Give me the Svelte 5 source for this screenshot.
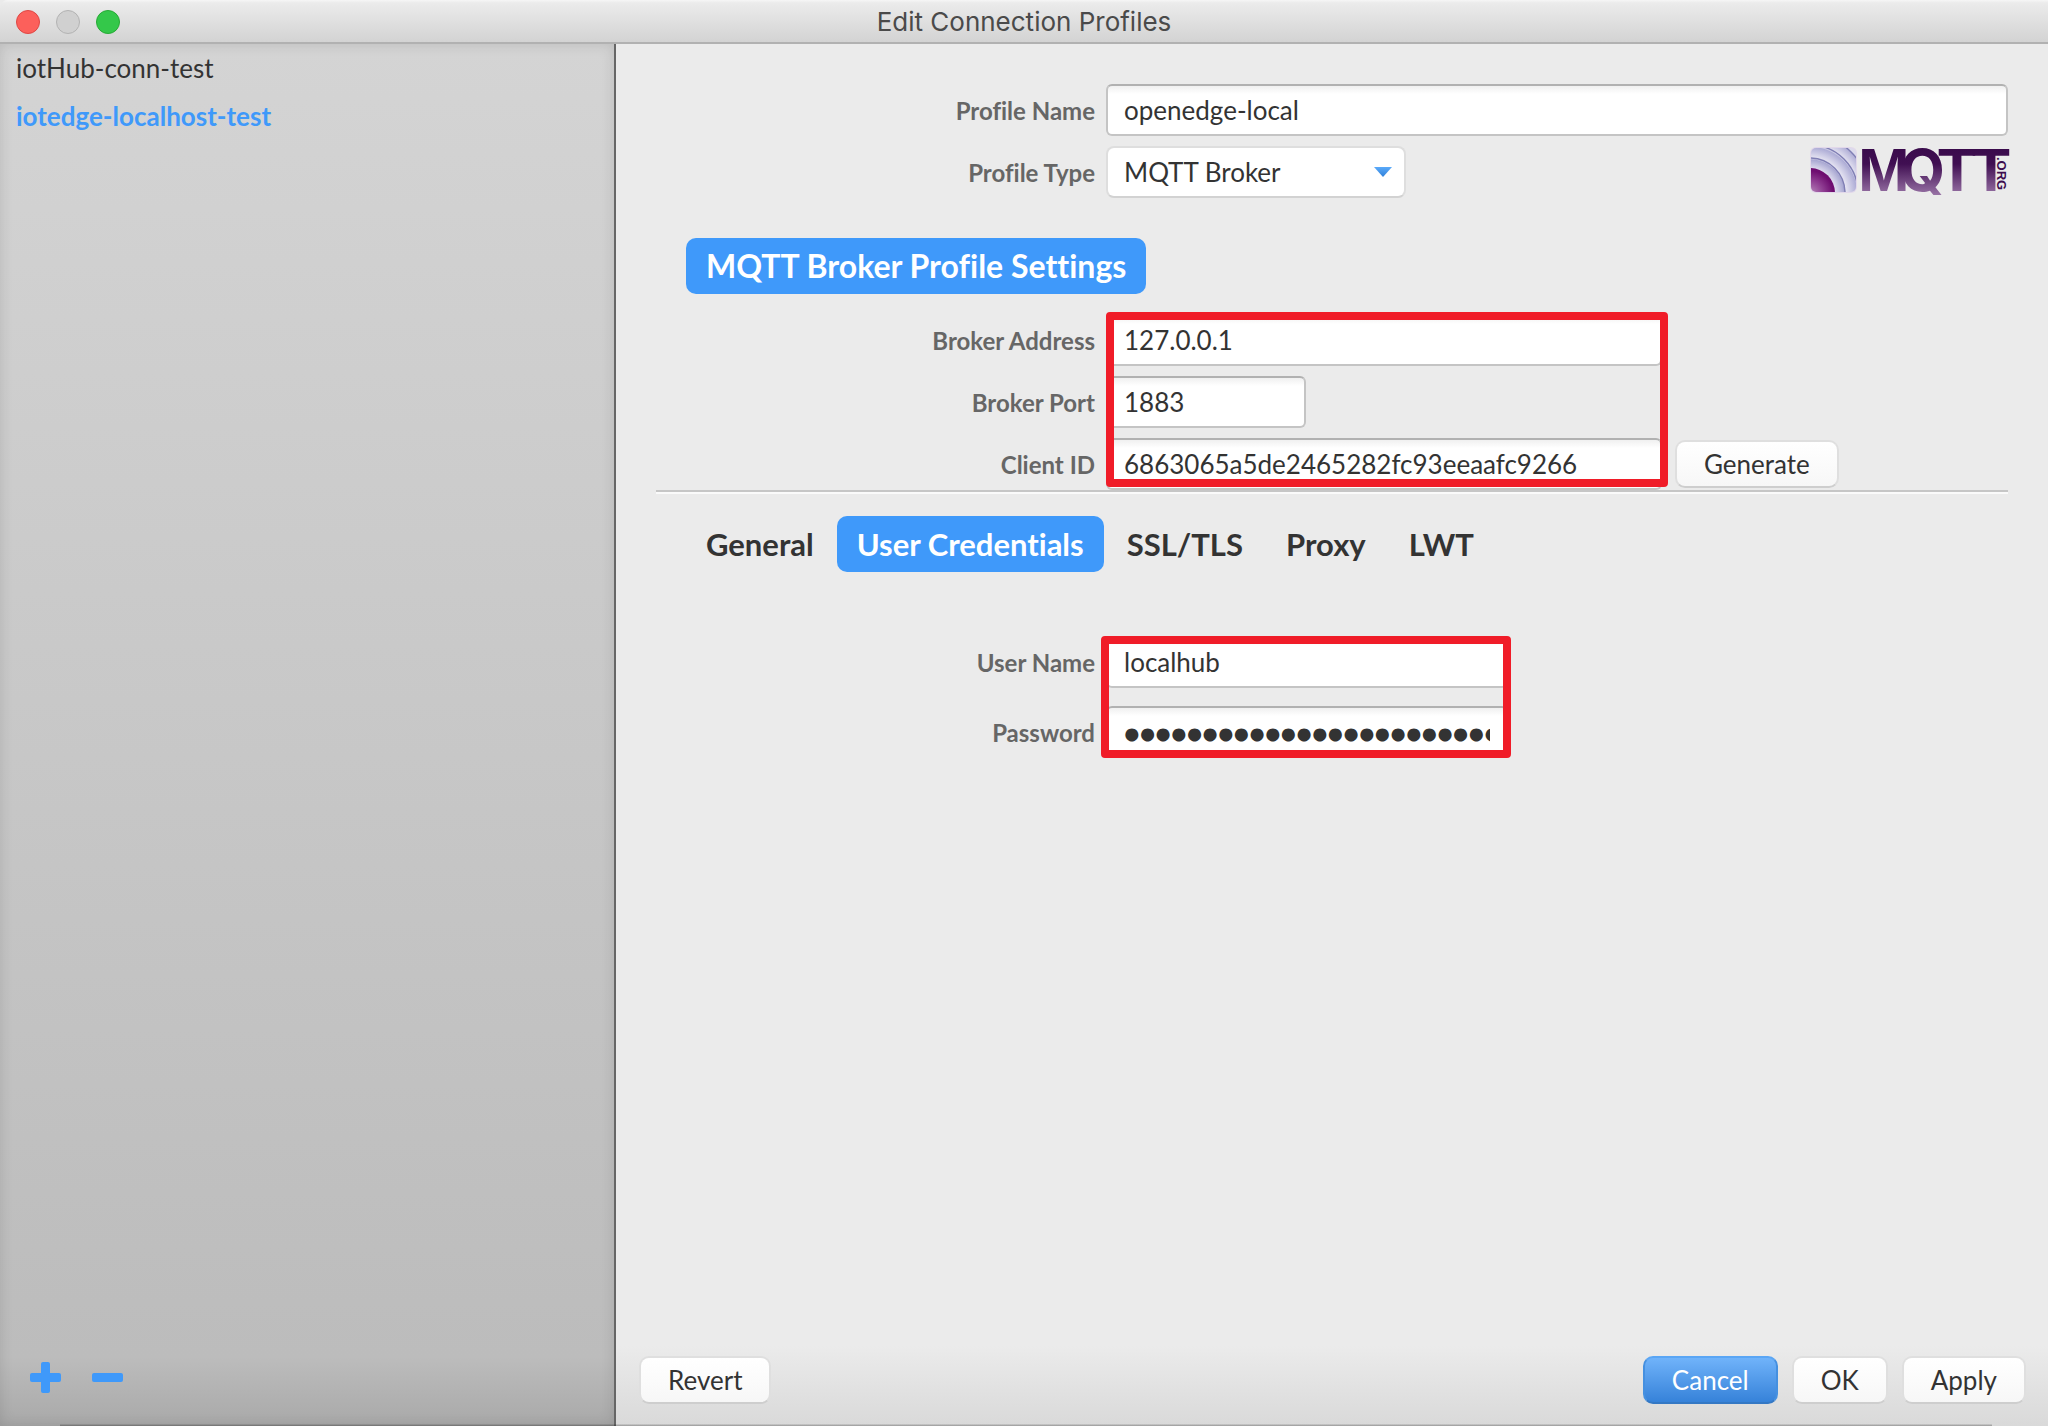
<script lang="ts">
  const profiles = ['iotHub-conn-test', 'iotedge-localhost-test'];
  const tabs = ['General', 'User Credentials', 'SSL/TLS', 'Proxy', 'LWT'];
  let selected = $state('iotedge-localhost-test');
  let activeTab = $state('User Credentials');
  let profileName = $state('openedge-local');
  let profileType = $state('MQTT Broker');
  let address = $state('127.0.0.1');
  let port = $state('1883');
  let clientId = $state('6863065a5de2465282fc93eeaafc9266');
  let userName = $state('localhub');
  let password = $state('abcdefghijklmnopqrstuvwxyz012345');
</script>

<div class="window">
  <header class="titlebar">
    <div class="lights">
      <button class="light close" aria-label="Close"></button>
      <button class="light minimize" aria-label="Minimize"></button>
      <button class="light zoom" aria-label="Zoom"></button>
    </div>
    <h1>Edit Connection Profiles</h1>
    <div></div>
  </header>

  <div class="body">
    <aside class="sidebar">
      <ul>
        {#each profiles as name}
          <li>
            <button class="profile" class:selected={name === selected} onclick={() => (selected = name)}>{name}</button>
          </li>
        {/each}
      </ul>
      <div class="tools">
        <button class="tool" aria-label="Add profile">
          <svg width="32" height="32" viewBox="0 0 32 32" fill="#3f99fa">
            <rect x="11" y="0" width="9" height="31" rx="2" />
            <rect x="0" y="11" width="31" height="9" rx="2" />
          </svg>
        </button>
        <button class="tool" aria-label="Remove profile">
          <svg width="32" height="32" viewBox="0 0 32 32" fill="#3f99fa">
            <rect x="0" y="11" width="31" height="9" rx="2" />
          </svg>
        </button>
      </div>
    </aside>

    <main>
      <div class="content">
        <section class="group">
          <label for="profile-name">Profile Name</label>
          <input id="profile-name" class="field" bind:value={profileName} />
          <label for="profile-type">Profile Type</label>
          <div class="type-row">
            <div class="select-wrap">
              <select id="profile-type" bind:value={profileType}>
                <option>MQTT Broker</option>
              </select>
              <svg class="arrow" width="18" height="10" viewBox="0 0 18 10">
                <defs>
                  <linearGradient id="arrow-fill" x1="0" y1="0" x2="0" y2="1">
                    <stop offset="0" stop-color="#5aaafa" />
                    <stop offset="1" stop-color="#2f80d8" />
                  </linearGradient>
                </defs>
                <path d="M0 0H18L9 10Z" fill="url(#arrow-fill)" />
              </svg>
            </div>
            <svg class="logo" width="198" height="52" viewBox="0 0 198 52" role="img" aria-label="MQTT.ORG">
              <defs>
                <linearGradient id="word" gradientUnits="userSpaceOnUse" x1="0" y1="3" x2="0" y2="50">
                  <stop offset="0" stop-color="#3a0b4c" />
                  <stop offset="0.32" stop-color="#400f52" />
                  <stop offset="1" stop-color="#9b76a8" />
                </linearGradient>
                <radialGradient id="waves" gradientUnits="userSpaceOnUse" cx="0" cy="48" r="60">
                  <stop offset="0.4" stop-color="#e6e4f2" />
                  <stop offset="0.57" stop-color="#a9a8d2" />
                  <stop offset="0.6" stop-color="#e6e4f2" />
                  <stop offset="0.78" stop-color="#aeadd6" />
                  <stop offset="0.81" stop-color="#e4e2f1" />
                  <stop offset="0.96" stop-color="#b4b2d8" />
                  <stop offset="1" stop-color="#dcdaec" />
                </radialGradient>
                <radialGradient id="core" gradientUnits="userSpaceOnUse" cx="0" cy="48" r="26">
                  <stop offset="0" stop-color="#b98abd" />
                  <stop offset="0.55" stop-color="#8d3a90" />
                  <stop offset="0.9" stop-color="#6e0d70" />
                </radialGradient>
                <clipPath id="tile"><rect x="1" y="2" width="45" height="44" rx="5" /></clipPath>
              </defs>
              <rect x="0" y="1" width="47" height="46" rx="6" fill="#e2d8ea" />
              <g clip-path="url(#tile)">
                <rect x="1" y="2" width="45" height="44" fill="url(#waves)" />
                <circle cx="0" cy="47" r="25" fill="url(#core)" />
                <g fill="none" stroke="#7f7eb4" stroke-width="1.4">
                  <circle cx="0" cy="47" r="35" />
                  <circle cx="0" cy="47" r="48" />
                  <circle cx="0" cy="47" r="58" />
                </g>
              </g>
              <text class="word" x="48 90 128 162" y="45" fill="url(#word)">M<tspan class="round">Q</tspan>TT</text>
              <text class="org" transform="translate(187 11) rotate(90)" fill="#3d0d4f">.ORG</text>
            </svg>
          </div>
        </section>

        <h2 class="pill">MQTT Broker Profile Settings</h2>

        <section class="group broker">
          <label for="address">Broker Address</label>
          <input id="address" class="field wide" bind:value={address} />
          <label for="port">Broker Port</label>
          <input id="port" class="field short" bind:value={port} />
          <label for="client-id">Client ID</label>
          <div class="client-row">
            <input id="client-id" class="field wide" bind:value={clientId} />
            <button class="btn">Generate</button>
          </div>
          <div class="mark broker-mark"></div>
        </section>

        <hr />

        <div class="tabs" role="tablist">
          {#each tabs as tab}
            <button class="tab" class:active={tab === activeTab} role="tab" aria-selected={tab === activeTab} onclick={() => (activeTab = tab)}>{tab}</button>
          {/each}
        </div>

        <section class="group credentials">
          <label for="user">User Name</label>
          <input id="user" class="field medium" bind:value={userName} />
          <label for="pass">Password</label>
          <input id="pass" class="field medium" type="password" bind:value={password} />
          <div class="mark user-mark"></div>
        </section>
      </div>

      <footer>
        <button class="btn">Revert</button>
        <div class="spacer"></div>
        <button class="btn primary">Cancel</button>
        <button class="btn">OK</button>
        <button class="btn">Apply</button>
      </footer>
    </main>
  </div>
</div>

<style>
  :global(body) {
    margin: 0;
    background: #ebebeb;
  }
  .window {
    position: relative;
    display: flex;
    flex-direction: column;
    min-height: 100vh;
    font-family: Lato, 'Liberation Sans', sans-serif;
    font-size: 26px;
    font-variant-ligatures: none;
    color: #333;
  }
  .window * {
    box-sizing: border-box;
  }
  .window::after {
    content: '';
    position: absolute;
    left: 60px;
    right: 56px;
    bottom: 0;
    height: 2px;
    background: linear-gradient(rgba(0, 0, 0, 0.05), rgba(0, 0, 0, 0.3));
  }
  button,
  input,
  select {
    font: inherit;
    font-variant-ligatures: none;
    color: inherit;
    margin: 0;
  }
  button {
    border: 0;
    padding: 0;
    background: none;
  }
  .titlebar {
    display: grid;
    grid-template-columns: 1fr auto 1fr;
    align-items: center;
    height: 44px;
    padding: 2px 16px 0;
    background: linear-gradient(#f6f6f6 0, #ebebeb 3px, #d3d3d3 100%);
    border-bottom: 2px solid #b1b1b1;
    border-radius: 8px 0 0 0;
  }
  h1 {
    margin: 0;
    font-family: Inter, 'Liberation Sans', sans-serif;
    font-size: 26px;
    font-weight: 400;
    line-height: 32px;
    color: #4a4a4a;
  }
  .lights {
    display: flex;
    gap: 16px;
  }
  .light {
    width: 24px;
    height: 24px;
    border-radius: 50%;
    border: 1px solid #b3b3b3;
    background: #d0d0d0;
  }
  .close {
    background: #fc605b;
    border-color: #df4744;
  }
  .zoom {
    background: #34c84a;
    border-color: #27aa35;
  }
  .body {
    flex: 1;
    display: flex;
  }
  .sidebar {
    width: 616px;
    flex: none;
    display: flex;
    flex-direction: column;
    justify-content: space-between;
    border-right: 2px solid #666;
    background: linear-gradient(#d4d4d4, #bcbcbc 95%, #a9a9a9);
    box-shadow: inset 0 0 14px rgba(0, 0, 0, 0.12);
  }
  ul {
    list-style: none;
    margin: 0;
    padding: 0;
  }
  .profile {
    display: block;
    width: 100%;
    height: 48px;
    padding: 0 16px;
    text-align: left;
  }
  .profile.selected {
    color: #3f99fa;
    font-weight: 700;
  }
  .tools {
    display: flex;
    gap: 30px;
    padding: 0 30px 32px;
  }
  .tool svg {
    display: block;
  }
  main {
    flex: 1;
    min-width: 0;
    display: flex;
    flex-direction: column;
    justify-content: space-between;
    background: linear-gradient(to top, #d9d9d9, #ebebeb 80px);
  }
  .content {
    padding: 40px 40px 0;
  }
  .group {
    position: relative;
    display: grid;
    grid-template-columns: 440px minmax(0, 1fr);
    column-gap: 10px;
    row-gap: 10px;
    align-items: center;
  }
  label {
    padding: 2px 1px 0 0;
    text-align: right;
    font-size: 24px;
    font-weight: 700;
    line-height: 32px;
    color: #666;
  }
  .field {
    width: 100%;
    height: 52px;
    padding: 0 16px;
    border: 2px solid #c4c4c4;
    border-top-color: #b1b1b1;
    border-radius: 6px;
    background: linear-gradient(#f0f0f0, #fff 8px);
    outline: 0;
  }
  .field.wide {
    width: 556px;
  }
  .field.short {
    width: 200px;
  }
  .field.medium {
    width: 402px;
  }
  .field[type='password'] {
    font-size: 27px;
    -webkit-text-stroke: 3px #333;
  }
  .type-row {
    display: flex;
    justify-content: space-between;
    align-items: center;
  }
  .select-wrap {
    position: relative;
    width: 300px;
  }
  select {
    display: block;
    appearance: none;
    width: 100%;
    height: 52px;
    padding: 0 16px;
    border: 2px solid #dedede;
    border-bottom-color: #d2d2d2;
    border-radius: 8px;
    background: #fff;
  }
  .arrow {
    position: absolute;
    right: 14px;
    top: 21px;
    pointer-events: none;
  }
  .logo {
    overflow: visible;
  }
  .word {
    font: 700 62px 'Liberation Sans', Arial, sans-serif;
  }
  .round {
    font: 700 58px Inter, sans-serif;
  }
  .org {
    font: 700 13px 'Liberation Sans', Arial, sans-serif;
  }
  .pill,
  .tab {
    height: 56px;
    padding: 0 20px;
    border-radius: 10px;
    font-size: 31px;
    font-weight: 700;
    line-height: 56px;
  }
  .pill {
    width: fit-content;
    margin: 40px 0 20px 30px;
    font-size: 32px;
    background: #3f99fa;
    color: #fff;
  }
  .client-row {
    display: flex;
    align-items: center;
    gap: 13px;
  }
  .mark {
    position: absolute;
    border: 8px solid #f01c28;
    border-radius: 4px;
    pointer-events: none;
  }
  .broker-mark {
    left: 450px;
    top: -2px;
    bottom: 3px;
    width: 562px;
  }
  .user-mark {
    left: 445px;
    top: 0;
    bottom: 0;
    width: 410px;
  }
  hr {
    margin: 0;
    height: 4px;
    border: 0;
    border-top: 2px solid #c6c6c6;
    background: #fafafa;
  }
  .tabs {
    display: flex;
    gap: 3px;
    margin: 22px 0 64px 30px;
  }
  .tab.active {
    background: #3f99fa;
    color: #fff;
  }
  .credentials {
    row-gap: 18px;
  }
  footer {
    display: flex;
    gap: 14px;
    padding: 0 22px 22px 23px;
  }
  .spacer {
    flex: 1;
  }
  .btn {
    min-width: 96px;
    height: 48px;
    padding: 0 27px;
    border: 2px solid #dfdfdf;
    border-bottom-color: #cecece;
    border-radius: 10px;
    background: linear-gradient(#fff, #f7f7f7);
  }
  .primary {
    color: #fff;
    border-color: #5aa6f5 #4590e0 #3478c4;
    background: linear-gradient(#70b3fa, #3682d9);
  }
</style>
